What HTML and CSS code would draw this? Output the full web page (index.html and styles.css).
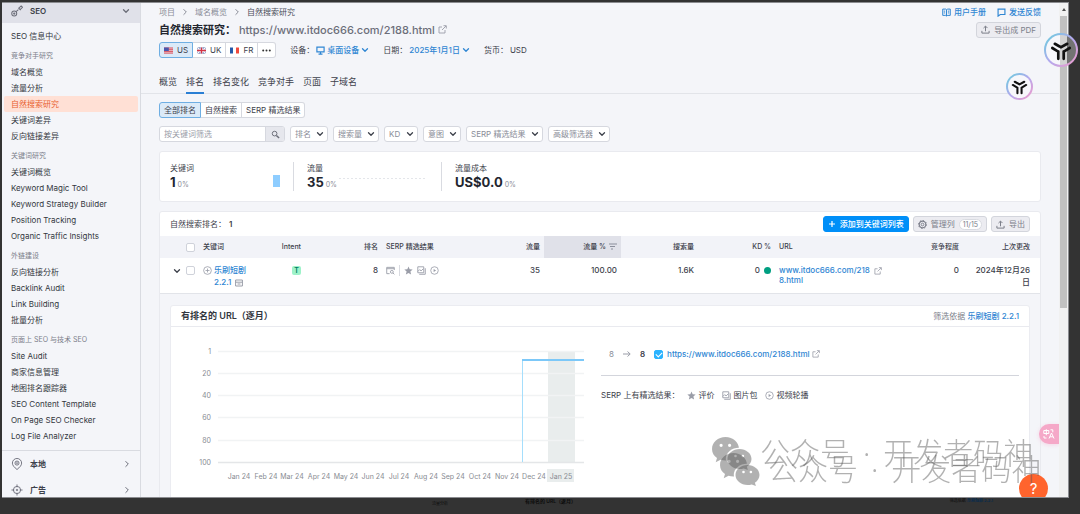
FILE: index.html
```html
<!DOCTYPE html>
<html lang="zh-CN">
<head>
<meta charset="utf-8">
<title>自然搜索研究</title>
<link rel="stylesheet" href="styles.css">
</head>
<body>
<svg class="sprite" aria-hidden="true">
  <symbol id="down" viewBox="0 0 8 8"><path d="M1.5 2.8 4 5.3 6.5 2.8" fill="none" stroke="currentColor" stroke-width="1.3" stroke-linecap="round" stroke-linejoin="round"/></symbol>
  <symbol id="right" viewBox="0 0 8 8"><path d="M2.8 1.5 5.3 4 2.8 6.5" fill="none" stroke="currentColor" stroke-width="1" stroke-linecap="round" stroke-linejoin="round"/></symbol>
  <symbol id="external" viewBox="0 0 9 9"><path d="M4 2H1v6h6V5M5.5.7h2.8v2.8M8 1 4 5" fill="none" stroke="currentColor" stroke-width=".9"/></symbol>
  <symbol id="upload" viewBox="0 0 10 10"><path d="M1 6.5V9h8V6.5M5 7V1.4M2.8 3.4 5 1.2l2.2 2.2" fill="none" stroke="currentColor" stroke-width="1.1"/></symbol>
  <symbol id="star" viewBox="0 0 10 10"><path d="M5 .6 6.3 3.7l3.3.3-2.5 2.2.8 3.2L5 7.7 2.1 9.4l.8-3.2L.4 4l3.3-.3z" fill="currentColor"/></symbol>
  <symbol id="images" viewBox="0 0 10 10"><path d="M.9.9h6.6v6.6H.9zM9.2 2.5v6.7H2.5M1 6l2-2 1.5 1.5L7 3" fill="none" stroke="currentColor" stroke-width="1"/></symbol>
  <symbol id="video" viewBox="0 0 10 10"><circle cx="5" cy="5" r="4.2" fill="none" stroke="currentColor" stroke-width=".9"/><path d="M4 3.2 6.8 5 4 6.8z" fill="currentColor"/></symbol>
  <symbol id="tri" viewBox="0 0 30 30"><path d="M8.800 8.800 15 12.200 21.200 8.800M6.300 13 12.300 16.600V23.800M23.700 13 17.700 16.600V23.800" fill="none" stroke="#111" stroke-width="2.700" stroke-linecap="round" stroke-dasharray="5.500 .7 30"/></symbol>
  <symbol id="bubbles" viewBox="0 0 42 34"><mask id="cut"><rect width="42" height="34" fill="#fff"/><ellipse cx="28" cy="23" rx="13.200" ry="11.200" fill="#000"/></mask><g mask="url(#cut)"><path fill="currentColor" fill-rule="evenodd" d="M14.500 1C7 1 1 6.200 1 13c0 3.800 1.900 6.900 5 9l-1.300 4.200 4.800-2.500c1.600.5 3.200.8 5 .8C22 24.500 28 19.600 28 13S22 1 14.500 1zM8.500 9.300a1.600 1.600 0 1 1 3.200 0 1.600 1.600 0 0 1-3.200 0zm8.500 0a1.600 1.600 0 1 1 3.200 0 1.600 1.600 0 0 1-3.200 0z"/></g><path fill="currentColor" fill-rule="evenodd" d="M28.500 13C22 13 16.500 17.400 16.500 23s5.500 10 12 10c1.500 0 2.900-.2 4.200-.6l4.200 1.600-1-3.300c2.800-1.800 4.600-4.500 4.600-7.700 0-5.600-5.500-10-12-10zm-5.300 7a1.300 1.300 0 1 1 2.600 0 1.300 1.300 0 0 1-2.600 0zm7.400 0a1.300 1.300 0 1 1 2.600 0 1.300 1.300 0 0 1-2.600 0z"/></symbol>
</svg>

<div class="window">
  <nav class="sidebar">
    <button class="side-head">
      <svg class="icon-m" viewBox="0 0 13 13"><g fill="none" stroke="#6c6e79" stroke-width="1.1"><circle cx="3.500" cy="9.300" r="2.700"/><circle cx="3.500" cy="9.300" r=".7"/><path d="M5.500 7.300 8 5M8 3l2.500 2.500M8.500 3.500 11 1l1.500 1.500L10 5z" /></g></svg>
      <span>SEO</span><svg class="icon"><use href="#down"/></svg>
    </button>
    <a class="side-item side-top" href="#">SEO 信息中心</a>
    <div class="side-group">
      <p>竞争对手研究</p>
      <a class="side-item" href="#">域名概览</a>
      <a class="side-item" href="#">流量分析</a>
      <a class="side-item active" href="#">自然搜索研究</a>
      <a class="side-item" href="#">关键词差异</a>
      <a class="side-item" href="#">反向链接差异</a>
    </div>
    <div class="side-group">
      <p>关键词研究</p>
      <a class="side-item" href="#">关键词概览</a>
      <a class="side-item" href="#">Keyword Magic Tool</a>
      <a class="side-item" href="#">Keyword Strategy Builder</a>
      <a class="side-item" href="#">Position Tracking</a>
      <a class="side-item" href="#">Organic Traffic Insights</a>
    </div>
    <div class="side-group">
      <p>外链建设</p>
      <a class="side-item" href="#">反向链接分析</a>
      <a class="side-item" href="#">Backlink Audit</a>
      <a class="side-item" href="#">Link Building</a>
      <a class="side-item" href="#">批量分析</a>
    </div>
    <div class="side-group">
      <p>页面上 SEO 与技术 SEO</p>
      <a class="side-item" href="#">Site Audit</a>
      <a class="side-item" href="#">商家信息管理</a>
      <a class="side-item" href="#">地图排名跟踪器</a>
      <a class="side-item" href="#">SEO Content Template</a>
      <a class="side-item" href="#">On Page SEO Checker</a>
      <a class="side-item" href="#">Log File Analyzer</a>
    </div>
    <div class="side-foot">
      <button><svg class="icon-m" viewBox="0 0 13 13"><g fill="none" stroke="#6c6e79"><path d="M6.500 12.500C3.500 10 1.500 8 1.500 5.500a5 5 0 0 1 10 0C11.500 8 9.500 10 6.500 12.500z"/><circle cx="6.500" cy="5.500" r="2.200"/><circle cx="6.500" cy="5.500" r=".5"/></g></svg><span>本地</span><svg class="icon"><use href="#right"/></svg></button>
      <button><svg class="icon-m" viewBox="0 0 13 13"><g fill="none" stroke="#6c6e79"><circle cx="6.500" cy="6.500" r="3.900"/><circle cx="6.500" cy="6.500" r=".8"/><path d="M6.500.5v3M6.500 9.500v3M.5 6.500h3M9.500 6.500h3"/></g></svg><span>广告</span><svg class="icon"><use href="#right"/></svg></button>
    </div>
  </nav>

  <main class="main">
    <header class="head">
      <div class="line crumbs-line">
        <a href="#">项目</a><svg class="icon"><use href="#right"/></svg><a href="#">域名概览</a><svg class="icon"><use href="#right"/></svg><span class="here">自然搜索研究</span>
        <span class="help">
          <a class="blue" href="#"><svg class="icon-s" viewBox="0 0 10 10"><path d="M.8 1.200h3.400L5 2l.8-.8h3.400v7H5.800L5 9l-.8-.8H.8zM5 2v7M2 3.500h1.500M2 5.500h1.500M6.500 3.500H8M6.500 5.500H8" fill="none" stroke="currentColor" stroke-width="1.100"/></svg>用户手册</a>
          <a class="blue" href="#"><svg class="icon-s" viewBox="0 0 10 10"><path d="M1.200 1.200h7.600v6H3.600L1.200 9z" fill="none" stroke="currentColor" stroke-width="1.300"/></svg>发送反馈</a>
        </span>
      </div>
      <div class="line title-line">
        <h1>自然搜索研究：<a href="#">https://www.itdoc666.com/2188.html</a></h1><svg class="icon-s gray"><use href="#external"/></svg>
        <button class="btn push"><svg class="icon-s"><use href="#upload"/></svg>导出成 PDF</button>
      </div>
      <div class="line tools-line">
        <div class="seg">
          <button class="on"><svg class="flag" viewBox="0 0 9 6"><path fill="#f3d5d8" d="M0 0h9v6H0z"/><path stroke="#cf4455" stroke-width=".9" d="M0 .5h9M0 2.200h9M0 3.900h9M0 5.600h9"/><path fill="#4956ac" d="M0 0h4.800v3.500H0z"/></svg>US</button>
          <button><svg class="flag" viewBox="0 0 9 6"><path fill="#39539c" d="M0 0h9v6H0z"/><path stroke="#fff" stroke-width="1.100" d="m0 0 9 6M9 0 0 6"/><path stroke="#fff" stroke-width="2.400" d="M4.500 0v6M0 3h9"/><path stroke="#d33345" stroke-width="1.300" d="M4.500 0v6M0 3h9"/></svg>UK</button>
          <button><svg class="flag" viewBox="0 0 9 6"><path fill="#fff" d="M0 0h9v6H0z"/><path fill="#2458a8" d="M0 0h3v6H0z"/><path fill="#ef4a3c" d="M6 0h3v6H6z"/></svg>FR</button>
          <button aria-label="更多"><svg class="flag" viewBox="0 0 9 6"><g fill="#333"><circle cx="1.200" cy="3" r="1"/><circle cx="4.500" cy="3" r="1"/><circle cx="7.800" cy="3" r="1"/></g></svg></button>
        </div>
        <div class="opt">设备：<button class="link"><svg class="icon-s" viewBox="0 0 10 10"><path d="M1 1.200h8v5.300H1zM5 6.500V9M2.800 9h4.400" fill="none" stroke="currentColor" stroke-width="1.300"/></svg>桌面设备<svg class="icon"><use href="#down"/></svg></button></div>
        <div class="opt">日期：<button class="link">2025年1月1日<svg class="icon"><use href="#down"/></svg></button></div>
        <div class="opt">货币：<span>USD</span></div>
      </div>
    </header>

    <nav class="tabs">
      <a href="#">概览</a><a class="on" href="#">排名</a><a href="#">排名变化</a><a href="#">竞争对手</a><a href="#">页面</a><a href="#">子域名</a>
    </nav>

    <div class="content">
      <div class="seg kinds"><button class="on">全部排名</button><button>自然搜索</button><button>SERP 精选结果</button></div>
      <div class="filters">
        <form class="search"><input type="text" placeholder="按关键词筛选" aria-label="按关键词筛选"><button type="button" aria-label="搜索"><svg class="icon-s" viewBox="0 0 10 10"><path d="M6 6 9 9" stroke="currentColor" stroke-width="1.600"/><circle cx="4" cy="4" r="2.600" fill="none" stroke="currentColor" stroke-width="1.100"/></svg></button></form>
        <label class="pick"><select aria-label="排名"><option>排名</option></select><svg class="icon"><use href="#down"/></svg></label>
        <label class="pick"><select aria-label="搜索量"><option>搜索量</option></select><svg class="icon"><use href="#down"/></svg></label>
        <label class="pick"><select aria-label="KD"><option>KD</option></select><svg class="icon"><use href="#down"/></svg></label>
        <label class="pick"><select aria-label="意图"><option>意图</option></select><svg class="icon"><use href="#down"/></svg></label>
        <label class="pick"><select aria-label="SERP 精选结果"><option>SERP 精选结果</option></select><svg class="icon"><use href="#down"/></svg></label>
        <label class="pick"><select aria-label="高级筛选器"><option>高级筛选器</option></select><svg class="icon"><use href="#down"/></svg></label>
      </div>

      <section class="card stats">
        <div class="stat"><h2>关键词</h2><p><b>1</b><small>0%</small><svg class="bar" viewBox="0 0 7 12"><path fill="#8ecdff" d="M0 0h7v12H0z"/></svg></p></div>
        <div class="stat"><h2>流量</h2><p><b>35</b><small>0%</small><svg class="trend" viewBox="0 0 88 12"><path d="M0 3.500h88" stroke="#e4e6ea" stroke-dasharray="2 2"/></svg></p></div>
        <div class="stat"><h2>流量成本</h2><p><b>US$0.0</b><small>0%</small></p></div>
      </section>

      <section class="card">
        <div class="list-head">
          <h2>自然搜索排名：<b>1</b></h2>
          <button class="btn primary push"><svg class="icon" viewBox="0 0 8 8"><path d="M4 1v6M1 4h6" stroke="#fff" stroke-width="1.200"/></svg>添加到关键词列表</button>
          <button class="btn"><svg class="icon-s" viewBox="0 0 10 10"><circle cx="5" cy="5" r="3.700" fill="none" stroke="currentColor" stroke-width="1.300"/><circle cx="5" cy="5" r="1.500" fill="none" stroke="currentColor"/><circle cx="5" cy="5" r="4.500" fill="none" stroke="currentColor" stroke-dasharray="1.400 2.100"/></svg>管理列<span class="count">11/15</span></button>
          <button class="btn"><svg class="icon-s"><use href="#upload"/></svg>导出</button>
        </div>
        <table>
          <colgroup><col class="c-check"><col class="c-num"><col class="c-intent"><col class="c-num"><col><col class="c-num"><col class="c-num"><col class="c-num"><col class="c-num"><col class="c-url"><col class="c-num"><col class="c-num"></colgroup>
          <thead><tr>
            <th class="pickcell"><input type="checkbox" aria-label="全选"></th><th>关键词</th><th class="r">Intent</th><th class="r">排名</th><th>SERP 精选结果</th><th class="r">流量</th>
            <th class="r sorted">流量 %<svg class="icon" viewBox="0 0 8 8"><path d="M0 1h8M1 3.500h5M2 6h2" stroke="#8a8e9b" stroke-width="1"/></svg></th>
            <th class="r">搜索量</th><th class="r">KD %</th><th>URL</th><th class="r">竞争程度</th><th class="r last">上次更改</th>
          </tr></thead>
          <tbody><tr>
            <td class="pickcell"><svg class="icon"><use href="#down"/></svg><input type="checkbox" aria-label="选择 乐刷短剧 2.2.1"></td>
            <td><div class="kw"><svg class="icon-s gray" viewBox="0 0 10 10"><circle cx="5" cy="5" r="4.300" fill="none" stroke="currentColor" stroke-width=".9"/><path d="M5 2.800v4.400M2.800 5h4.400" stroke="currentColor" stroke-width=".9"/></svg><span><a class="blue strong" href="#">乐刷短剧<br>2.2.1</a><svg class="icon gray gap" viewBox="0 0 8 8"><path d="M.6 1h6.800v6H.6zM.6 3.200h6.800M2.500 5h3" fill="none" stroke="currentColor"/></svg></span></div></td>
            <td class="r"><span class="tag">T</span></td>
            <td class="r">8</td>
            <td><div class="feats"><svg class="icon-s" viewBox="0 0 10 10"><path d="M4 8.500H.8v-7h8.400v3M.8 3h8.400" fill="none" stroke="currentColor"/><circle cx="6.500" cy="6.500" r="1.600" fill="none" stroke="currentColor"/><path d="m7.700 7.700 1.600 1.600" stroke="currentColor"/></svg><i></i><svg class="icon-s"><use href="#star"/></svg><svg class="icon-s"><use href="#images"/></svg><svg class="icon-s"><use href="#video"/></svg></div></td>
            <td class="r">35</td><td class="r">100.00</td><td class="r">1.6K</td>
            <td class="r">0<span class="dot"></span></td>
            <td class="urlcell"><a class="blue strong" href="#">www.itdoc666.com/218</a><svg class="icon gray gap"><use href="#external"/></svg><br><a class="blue strong" href="#">8.html</a></td>
            <td class="r">0</td><td class="r last">2024年12月26日</td>
          </tr></tbody>
        </table>

        <div class="expand">
          <section class="panel">
            <header><h3>有排名的 URL（逐月）</h3><p>筛选依据 <a class="blue strong" href="#">乐刷短剧 2.2.1</a></p></header>
            <div class="panel-body">
              <svg class="chart" viewBox="0 0 405 150" role="img" aria-label="逐月排名">
                <path fill="#e9eded" d="M367 15h27v111h-27zM366 133h27v13h-27z"/>
                <path stroke="#f1f3f4" stroke-width="1.500" d="M37 15.500h366M37 37.500h366M37 59.500h366M37 81.500h366M37 104.500h366"/>
                <path stroke="#e4e6e8" stroke-width="1.500" d="M37 126.500h366"/>
                <path stroke="#a5defc" d="M341.500 126V23.500" fill="none"/><path stroke="#7cc8f8" stroke-width="2" d="M341 24h62"/>
                <g text-anchor="end"><text x="30" y="18">1</text><text x="30" y="40">20</text><text x="30" y="62">40</text><text x="30" y="84">60</text><text x="30" y="107">80</text><text x="30" y="129">100</text></g>
                <g text-anchor="middle"><text x="58" y="143">Jan 24</text><text x="85" y="143">Feb 24</text><text x="111" y="143">Mar 24</text><text x="138" y="143">Apr 24</text><text x="165" y="143">May 24</text><text x="192" y="143">Jun 24</text><text x="218" y="143">Jul 24</text><text x="245" y="143">Aug 24</text><text x="272" y="143">Sep 24</text><text x="299" y="143">Oct 24</text><text x="326" y="143">Nov 24</text><text x="353" y="143">Dec 24</text><text x="380" y="143">Jan 25</text></g>
              </svg>
              <div class="detail">
                <div class="url-line"><span class="muted">8</span><svg class="icon gray" viewBox="0 0 8 8"><path d="M0 4h7M4.500 1.500 7.200 4 4.500 6.500" fill="none" stroke="currentColor"/></svg><b>8</b><label><input class="ticked" type="checkbox" checked aria-label="显示网址"></label><a class="blue strong" href="#">https://www.itdoc666.com/2188.html</a><svg class="icon gray"><use href="#external"/></svg></div>
                <div class="serp-line"><span class="cap">SERP 上有精选结果：</span><span><svg class="icon-s"><use href="#star"/></svg>评价</span><span><svg class="icon-s"><use href="#images"/></svg>图片包</span><span><svg class="icon-s"><use href="#video"/></svg>视频轮播</span></div>
              </div>
            </div>
          </section>
        </div>
      </section>
    </div>
    <button class="orb orb-small" aria-label="助手"><svg><use href="#tri"/></svg></button>
    <button class="translate" aria-label="翻译"><svg viewBox="0 0 12 10"><path d="M.8 1.500h5v3h-5zM3.300.2v6M7.500.8h2.300v2.500M1 7v2h2.500M6 9.500 8.500 4 11 9.500M7 7.800h3" fill="none" stroke="#fff" stroke-width="1"/></svg></button>
    <button class="ask" aria-label="帮助">?</button>
  </main>
  <div class="scrollbar"><span class="up"></span><span class="thumb"></span></div>
</div>
<div class="under"><span class="u1">流量分析</span><span class="u2">有排名的 URL（逐月）</span><span class="u3">筛选依据 <b>乐刷短剧 2.2.1</b></span></div>
<button class="orb orb-large" aria-label="助手"><svg><use href="#tri"/></svg></button>
<div class="mark mark-a"><svg><use href="#bubbles"/></svg><span>公众号</span><span class="sep">·</span><span>开发者码神</span></div>
<div class="mark mark-b"><svg><use href="#bubbles"/></svg><span>公众号</span><span class="sep">·</span><span>开发者码神</span></div>
</body>
</html>
```

FILE: styles.css
```css
* { box-sizing: border-box; }
body {
  margin: 0;
  height: 100vh;
  padding: 2px 11px 0 2px;
  display: flex;
  flex-direction: column;
  overflow: hidden;
  position: relative;
  background: #333;
  color: #3d414b;
  font: 8px/12px Inter, "Noto Sans CJK SC", sans-serif;
}
h1, h2, h3, p { margin: 0; font-size: inherit; font-weight: 400; }
a { color: inherit; text-decoration: none; }
button, input, select { font: inherit; color: inherit; margin: 0; padding: 0; border: 0; background: none; }
svg { flex: none; display: inline-block; vertical-align: middle; }
.sprite { position: absolute; width: 0; height: 0; }
.icon { width: 8px; height: 8px; }
.icon-s { width: 9px; height: 9px; }
.icon-m { width: 12px; height: 12px; }
.gray { color: #9a9da8; }
.blue { color: #2f86d3; }
.strong { font-weight: 500; }
.gap { margin-left: 4px; }
.push { margin-left: auto; }

.window {
  flex: 1;
  min-height: 0;
  display: flex;
  overflow: hidden;
  border: 1px solid #8b8c90;
  border-width: 1px 1px 1px 0;
  background: #f4f5f9;
}

/* Sidebar */
.sidebar { width: 139px; flex: none; border-right: 1px solid #d9dbe1; }
.side-head {
  width: 100%; height: 20px; padding: 0 10px 4px 9px;
  display: flex; align-items: center; gap: 7px;
  background: #e0e1e9; font-weight: 600; text-align: left; color: #3c3f49;
}
.side-head span, .side-foot span { flex: 1; }
.side-head > .icon, .side-foot .icon { color: #6c6e79; }
.side-item { display: block; height: 16px; line-height: 16px; margin: 0 2px; padding: 0 7px; border-radius: 2px; color: #333740; }
.side-top { margin-top: 5px; margin-bottom: 4px; }
.side-group { margin-bottom: 4px; }
.side-group p { height: 16px; line-height: 16px; padding-left: 9px; font-size: 7px; color: #7b7e89; }
.side-item.active { background: #ffe0d5; color: #e8602f; }
.side-foot { margin-top: 6px; border-top: 1px solid #d9dbe1; }
.side-foot button { width: 100%; height: 26px; padding: 0 9px; display: flex; align-items: center; gap: 7px; font-weight: 600; text-align: left; }

/* Page header */
.main { flex: 1; min-width: 0; position: relative; overflow: hidden; }
.head { padding: 2px 18px 0; }
.line { display: flex; align-items: center; }
.crumbs-line { height: 14px; gap: 6px; color: #8a8d98; }
.here { color: #4c4f59; }
.help { margin-left: auto; display: flex; gap: 11px; }
.help a { display: flex; align-items: center; gap: 3px; font-weight: 500; }
.title-line { height: 21px; gap: 3px; }
h1 { font-size: 11px; line-height: 16px; font-weight: 700; color: #23262f; }
h1 a { font-weight: 500; color: #6c6e79; margin-left: 3px; }
.btn {
  height: 16px; padding: 0 4px; display: flex; align-items: center; gap: 4px;
  border: 1px solid #d3d5dc; border-radius: 3px; background: #ececf1; color: #7b7e89;
}
.btn.primary { background: #008ff8; border-color: #008ff8; color: #fff; font-weight: 500; }
.count { height: 11px; line-height: 10px; padding: 0 3px; border: 1px solid #d9dbe1; border-radius: 6px; background: #fff; font-size: 7px; }
.tools-line { height: 20px; gap: 14px; }
.seg { display: flex; }
.seg button {
  height: 16px; padding: 0 4px; display: flex; align-items: center; gap: 4px;
  background: #fff; border: 1px solid #d6d8df; border-left-width: 0;
}
.seg button:first-child { border-left-width: 1px; border-radius: 3px 0 0 3px; }
.seg button:last-child { border-radius: 0 3px 3px 0; }
.seg button.on { background: #dbeaf8; border: 1px solid #6faee2; }
.flag { width: 9px; height: 7px; }
.opt { display: flex; align-items: center; gap: 2px; }
.link { display: flex; align-items: center; gap: 2px; color: #2f86d3; font-weight: 500; }

.tabs { display: flex; gap: 9px; padding: 15px 18px 0; border-bottom: 1px solid #e2e4e9; font-size: 9px; }
.tabs a { height: 19px; line-height: 14px; border-bottom: 2px solid transparent; margin-bottom: -1px; }
.tabs a.on { border-color: #2a7fd4; }

/* Filters */
.content { padding: 8px 18px 0; }
.filters { display: flex; gap: 5px; margin: 8px 0 9px; }
.search { display: flex; width: 126px; height: 16px; border: 1px solid #d6d8df; border-radius: 3px; background: #fff; overflow: hidden; }
.search input { flex: 1; min-width: 0; padding: 0 4px; outline: 0; }
.search input::placeholder { color: #9a9da8; opacity: 1; }
.search button { width: 19px; background: #e6e7ed; border-left: 1px solid #d6d8df; display: grid; place-items: center; color: #6c6e79; }
.pick { position: relative; }
.pick select { appearance: none; display: block; height: 16px; padding: 0 16px 0 4px; border: 1px solid #d6d8df; border-radius: 3px; background: #fff; color: #8a8d98; }
.pick svg { position: absolute; right: 4px; top: 4px; pointer-events: none; }

/* Cards */
.card { background: #fff; border: 1px solid #e9eaef; border-radius: 3px; margin-bottom: 9px; }
.stats { display: flex; padding: 10px; }
.stat { height: 29px; }
.stat:nth-child(1) { width: 123px; padding-right: 13px; }
.stat:nth-child(2) { width: 148px; padding-right: 13px; }
.stat + .stat { border-left: 1px solid #d9dbe1; padding-left: 13px; }
.stat p { display: flex; align-items: baseline; gap: 2px; line-height: 17px; }
.stat b { font-size: 13px; font-weight: 700; color: #23262f; }
.stat small { font-size: 7px; color: #8a8d98; }
.bar { width: 7px; height: 12px; margin-left: auto; }
.trend { width: 88px; height: 12px; }

.list-head { display: flex; align-items: center; gap: 4px; height: 24px; padding: 0 10px; }
.list-head b { margin-left: 3px; font-weight: 600; }
table { width: 100%; table-layout: fixed; border-collapse: collapse; }
.c-check { width: 39px; }
.c-num { width: 77px; }
.c-intent { width: 29px; }
.c-url { width: 111px; }
th, td { padding: 0 4px; text-align: left; font-weight: 500; }
th { height: 22px; background: #f2f3f8; font-size: 7px; }
td { padding-top: 6px; height: 35px; vertical-align: top; }
.r { text-align: right; }
.last { padding-right: 10px; }
td.last { padding-left: 9px; }
.sorted { background: #e0e1e9; }
.sorted svg { margin-left: 3px; }
.pickcell { text-align: right; }
input[type="checkbox"] { appearance: none; display: inline-block; width: 9px; height: 9px; vertical-align: middle; border: 1px solid #cfd2da; border-radius: 2px; background: #fff; }
.pickcell svg { margin-right: 5px; }
.kw { display: flex; gap: 2px; align-items: flex-start; }
.kw > svg { margin-top: 2px; }
.tag { display: inline-block; width: 9px; height: 9px; line-height: 9px; border-radius: 2px; background: #9ef2c9; color: #007c65; text-align: center; font-size: 7px; font-weight: 600; }
.feats { display: flex; align-items: center; gap: 4px; height: 13px; color: #9a9da8; }
.feats i { width: 1px; height: 11px; background: #d9dbe1; }
.dot { display: inline-block; width: 7px; height: 7px; border-radius: 50%; background: #009f81; margin-left: 4px; vertical-align: middle; }
.urlcell { white-space: nowrap; line-height: 10px; padding-top: 7px; }

/* Expanded row */
.expand { padding: 11px 10px 0; background: #f4f5f9; border-top: 1px solid #e2e4e9; }
.panel { background: #fff; border: 1px solid #ebecf1; border-radius: 3px; height: 240px; }
.panel header { height: 21px; padding: 0 10px; display: flex; align-items: center; justify-content: space-between; border-bottom: 1px solid #e9eaef; color: #7b7e89; }
.panel h3 { font-size: 9px; font-weight: 600; color: #333740; }
.panel-body { display: flex; gap: 15px; padding: 9px 10px; }
.chart { width: 405px; height: 150px; }
.chart text { font-size: 7px; fill: #888b92; }
.detail { flex: 1; margin-top: 9px; }
.url-line { display: flex; align-items: center; gap: 9px; height: 31px; padding: 0 8px 12px; border-bottom: 1px solid #d3d5dc; }
.url-line label { display: flex; margin-right: -5px; }
.url-line a { margin-right: -7px; }
.url-line b { font-weight: 600; }
.muted { color: #8a8d98; }
input.ticked { background: #2bb3ff; border-color: #2bb3ff; position: relative; }
input.ticked::after { content: ""; position: absolute; left: 1px; top: 1px; width: 5px; height: 3px; border: solid #fff; border-width: 0 0 1px 1px; transform: rotate(-45deg); }
.serp-line { display: flex; align-items: center; gap: 8px; margin-top: 13px; }
.serp-line span { display: flex; align-items: center; gap: 2px; }
.serp-line svg { color: #9a9da8; }

/* Scrollbar */
.scrollbar { width: 9px; flex: none; background: #f1f1f1; display: flex; flex-direction: column; align-items: center; }
.up { margin: 5px 0 5px; border: 2px solid transparent; border-top: 0; border-bottom: 3px solid #505050; }
.thumb { width: 7px; height: 292px; background: #c1c1c1; }

/* Floating controls */
.orb { position: absolute; border-radius: 50%; border: 2px solid transparent; background: linear-gradient(#f7f7fb, #f7f7fb) padding-box, linear-gradient(135deg, #62d0dc, #b3a9ee 50%, #f59ac8) border-box; }
.orb svg { display: block; width: 100%; height: 100%; }
.orb-small { width: 27px; height: 27px; right: 26px; top: 70px; }
.orb-large { width: 34px; height: 34px; right: 2px; top: 33px; background: linear-gradient(90deg, #f7f7fb 46%, #d2d2d2 46% 70%, #737373 70%) padding-box, linear-gradient(135deg, #62d0dc, #b3a9ee 50%, #f59ac8) border-box; }
.translate { position: absolute; right: 0; bottom: 53px; width: 20px; height: 20px; border-radius: 10px 0 0 10px; background: #f5a8c8; display: grid; place-items: center; box-shadow: 0 1px 4px #f5a8c866; }
.translate svg { width: 12px; height: 10px; }
.ask { position: absolute; right: 11px; bottom: -6px; width: 29px; height: 29px; border-radius: 50%; background: #ff642d; color: #fff; font-size: 15px; line-height: 29px; }

.mark { position: absolute; display: flex; align-items: center; color: #555; opacity: .45; pointer-events: none; font: 30px/36px "Noto Sans CJK SC", sans-serif; font-weight: 300; white-space: nowrap; }
.mark svg { width: 42px; height: 34px; margin-right: 7px; }
.mark span { padding-bottom: 3px; }
.mark .sep { padding: 0 13px; font-family: "Noto Sans", sans-serif; }
.mark-a { left: 711px; bottom: 42px; }
.mark-b { left: 719px; bottom: 26px; }

/* Dimmed page showing below the window */
.under { height: 16px; flex: none; position: relative; overflow: hidden; display: flex; padding: 0 76px 0 430px; color: #0c0c0c; font-size: 5px; line-height: 6px; }
.u1 { margin-top: 3px; font-size: 4px; }
.u2 { margin-left: 77px; font-weight: 600; }
.u3 { margin-left: auto; font-size: 4px; }
.u3 b { color: #0b2c4b; }
```
